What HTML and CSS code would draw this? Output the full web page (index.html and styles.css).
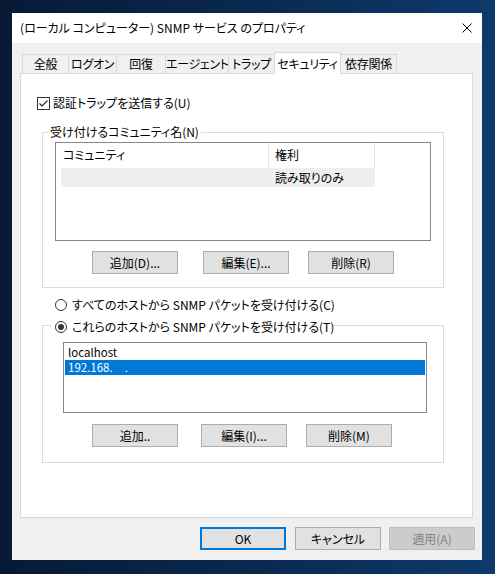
FILE: index.html
```html
<!DOCTYPE html>
<html lang="ja">

<head>
    <meta charset="UTF-8">
    <title>SNMP サービス のプロパティ</title>
    <link rel="stylesheet" href="styles.css">
</head>

<body>
    <div class="dialog">
        <div class="titlebar">
            <span class="title">(ローカル コンピューター) SNMP サービス のプロパティ</span>
            <svg class="close" width="10" height="10" viewBox="0 0 10 10">
                <path d="M0.5 0.5L9.5 9.5M9.5 0.5L0.5 9.5" stroke="#000" stroke-width="1" fill="none" />
            </svg>
        </div>

        <div class="tabs">
            <div class="tab t-general">全般</div>
            <div class="tab t-logon">ログオン</div>
            <div class="tab t-recovery">回復</div>
            <div class="tab t-agent">エージェント</div>
            <div class="tab t-traps">トラップ</div>
            <div class="tab t-security active">セキュリティ</div>
            <div class="tab t-deps">依存関係</div>
        </div>

        <div class="panel">
            <div class="check-row">
                <span class="checkbox">
                    <svg width="11" height="11" viewBox="0 0 11 11">
                        <path d="M1.5 5.5L4 8L9.5 2.5" stroke="#222" stroke-width="1.1" fill="none" />
                    </svg>
                </span>
                認証トラップを送信する(U)
            </div>

            <fieldset class="group community">
                <legend>受け付けるコミュニティ名(N)</legend>
                <div class="listview">
                    <div class="lv-head">
                        <div class="hcol c-name">コミュニティ</div>
                        <div class="hcol c-rights">権利</div>
                    </div>
                    <div class="lv-row">
                        <div class="rcol c-name"></div>
                        <div class="rcol c-rights">読み取りのみ</div>
                    </div>
                </div>
                <div class="btn-row">
                    <button class="btn b1">追加(D)...</button>
                    <button class="btn b2">編集(E)...</button>
                    <button class="btn b3">削除(R)</button>
                </div>
            </fieldset>

            <div class="radio-row">
                <span class="radio"></span>すべてのホストから SNMP パケットを受け付ける(C)
            </div>

            <fieldset class="group hosts">
                <legend><span class="radio on"></span>これらのホストから SNMP パケットを受け付ける(T)</legend>
                <div class="listbox">
                    <div class="item">localhost</div>
                    <div class="item selected">192.168.<span class="mask"></span>.</div>
                </div>
                <div class="btn-row">
                    <button class="btn b1">追加..</button>
                    <button class="btn b2">編集(I)...</button>
                    <button class="btn b3">削除(M)</button>
                </div>
            </fieldset>
        </div>

        <div class="footer">
            <button class="btn default">OK</button>
            <button class="btn cancel">キャンセル</button>
            <button class="btn apply" disabled>適用(A)</button>
        </div>
    </div>
</body>

</html>
```

FILE: styles.css
```css
* {
    box-sizing: border-box;
}

html,
body {
    margin: 0;
    height: 100%;
}

body {
    padding: 13px 0 0 12px;
    overflow: hidden;
    background: linear-gradient(90deg, #061a35 0%, #0a2a52 55%, #0d3a6c 100%);
    font-family: "Noto Sans CJK JP", "Noto Sans", sans-serif;
    font-size: 12px;
    line-height: 16px;
    color: #000;
    /* proportional kana, closer to the system UI font */
    font-feature-settings: "palt";
    white-space: nowrap;
}

.dialog {
    width: 470px;
    height: 547px;
    background: #f0f0f0;
    display: flex;
    flex-direction: column;
}

/* title bar */
.titlebar {
    height: 30px;
    flex: none;
    background: #fff;
    display: flex;
    align-items: center;
    justify-content: space-between;
    padding: 0 10px 0 8px;
}

.close {
    display: block;
}

/* tab strip */
.tabs {
    display: flex;
    height: 21px;
    flex: none;
    margin: 9px 0 0 8px;
    padding-left: 2px;
}

.tab {
    flex: none;
    height: 19px;
    margin-top: 2px;
    margin-left: -1px;
    border: 1px solid #d9d9d9;
    border-bottom: none;
    background: #f0f0f0;
    text-align: center;
    line-height: 18px;
    letter-spacing: -0.3px;
}

.tab:first-child {
    margin-left: 0;
}

.tab.active {
    position: relative;
    z-index: 1;
    height: 22px;
    margin-top: 0;
    background: #fff;
    line-height: 21px;
}

.t-general { width: 47px; }
.t-logon { width: 49px; }
.t-recovery { width: 50px; }
.t-agent { width: 64px; }
.t-traps { width: 47px; }
.t-security { width: 67px; }
.t-deps { width: 57px; }

/* property page */
.panel {
    height: 445px;
    flex: none;
    margin: 0 9px 0 8px;
    background: #fff;
    border: 1px solid #d9d9d9;
}

.check-row {
    display: flex;
    align-items: center;
    margin-top: 21px;
    padding-left: 16px;
}

.checkbox {
    width: 13px;
    height: 13px;
    margin-right: 3px;
    border: 1px solid #333;
    display: flex;
    align-items: center;
    justify-content: center;
}

.checkbox svg {
    display: block;
}

.group {
    margin: 0 0 0 21px;
    width: 402px;
    min-width: 0;
    border: 1px solid #dcdcdc;
}

.group legend {
    padding: 0 2px;
    line-height: 16px;
}

.community {
    margin-top: 13px;
    padding: 2px 12px 13px;
}

.community legend {
    margin-left: -7px;
}

.hosts {
    margin-top: 2px;
    padding: 7px 16px 15px 20px;
}

.hosts legend {
    display: flex;
    align-items: center;
    width: 280px;
    margin-left: -11px;
    padding: 4px 3px 0;
}

/* community list view */
.listview {
    height: 99px;
    border: 1px solid #828790;
    background: #fff;
}

.lv-head {
    display: flex;
    height: 25px;
    align-items: center;
}

.hcol {
    height: 25px;
    line-height: 24px;
    border-right: 1px solid #e5e5e5;
}

.lv-head .c-name {
    width: 213px;
    padding-left: 7px;
}

.lv-head .c-rights {
    width: 106px;
    padding-left: 6px;
}

.lv-row {
    display: flex;
    width: 314px;
    height: 19px;
    margin-left: 5px;
    background: #efefef;
    line-height: 19px;
}

.lv-row .c-name {
    width: 208px;
}

.lv-row .c-rights {
    padding-left: 6px;
}

/* host list box */
.listbox {
    height: 71px;
    width: 364px;
    padding: 2px 1px 1px;
    border: 1px solid #828790;
    background: #fff;
}

.item {
    height: 15px;
    line-height: 15px;
    padding-left: 3px;
    font-size: 11.5px;
}

.item.selected {
    background: #0078d7;
    color: #fff;
}

.mask {
    display: inline-block;
    width: 12px;
}

/* radio buttons */
.radio-row {
    display: flex;
    align-items: center;
    margin-top: 9px;
    padding-left: 34px;
}

.radio {
    width: 12px;
    height: 12px;
    margin-right: 5px;
    border: 1px solid #333;
    border-radius: 50%;
    display: inline-flex;
    align-items: center;
    justify-content: center;
    flex: none;
}

.radio.on::after {
    content: "";
    width: 6px;
    height: 6px;
    border-radius: 50%;
    background: #333;
}

/* push buttons */
.btn {
    width: 86px;
    height: 23px;
    padding: 0;
    border: 1px solid #adadad;
    background: #e1e1e1;
    font: inherit;
    color: #000;
    line-height: 20px;
}

.btn-row {
    display: flex;
}

.community .btn-row {
    margin-top: 10px;
}

.community .b1 { margin-left: 37px; }
.community .b2 { margin-left: 25px; }
.community .b3 { margin-left: 19px; }

.hosts .btn-row {
    margin-top: 11px;
}

.hosts .b1 { margin-left: 29px; }
.hosts .b2 { margin-left: 23px; }
.hosts .b3 { margin-left: 19px; }

/* dialog buttons */
.footer {
    display: flex;
    justify-content: flex-end;
    margin-top: 9px;
    padding-right: 7px;
}

.btn.default {
    border: 2px solid #0078d7;
}

.btn.cancel {
    margin-left: 9px;
}

.btn.apply {
    margin-left: 8px;
    background: #cccccc;
    border-color: #bfbfbf;
    color: #838383;
}
```
